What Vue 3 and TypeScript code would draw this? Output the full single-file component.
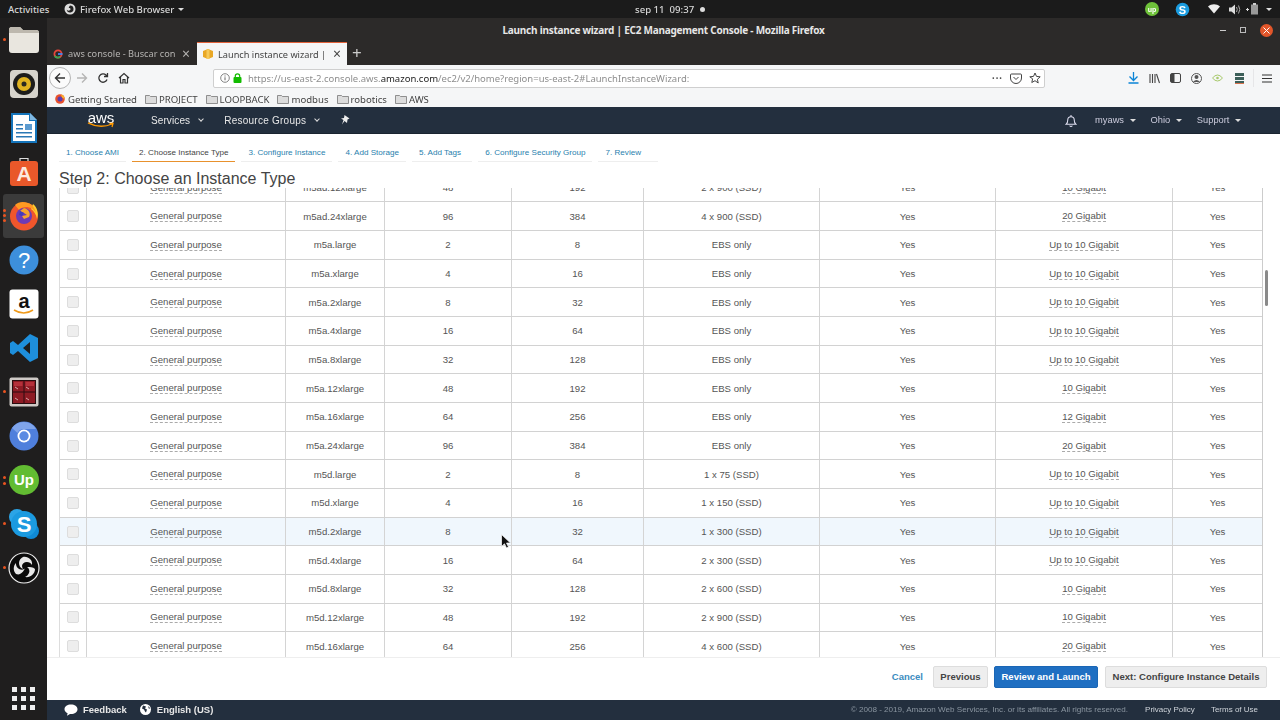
<script setup lang="ts">
type Row = {
  type: string;
  cpu: number;
  mem: number;
  storage: string;
  net: string;
  hover?: boolean;
};

const rows: Row[] = [
  { type: "m5ad.12xlarge", cpu: 48, mem: 192, storage: "2 x 900 (SSD)", net: "10 Gigabit" },
  { type: "m5ad.24xlarge", cpu: 96, mem: 384, storage: "4 x 900 (SSD)", net: "20 Gigabit" },
  { type: "m5a.large", cpu: 2, mem: 8, storage: "EBS only", net: "Up to 10 Gigabit" },
  { type: "m5a.xlarge", cpu: 4, mem: 16, storage: "EBS only", net: "Up to 10 Gigabit" },
  { type: "m5a.2xlarge", cpu: 8, mem: 32, storage: "EBS only", net: "Up to 10 Gigabit" },
  { type: "m5a.4xlarge", cpu: 16, mem: 64, storage: "EBS only", net: "Up to 10 Gigabit" },
  { type: "m5a.8xlarge", cpu: 32, mem: 128, storage: "EBS only", net: "Up to 10 Gigabit" },
  { type: "m5a.12xlarge", cpu: 48, mem: 192, storage: "EBS only", net: "10 Gigabit" },
  { type: "m5a.16xlarge", cpu: 64, mem: 256, storage: "EBS only", net: "12 Gigabit" },
  { type: "m5a.24xlarge", cpu: 96, mem: 384, storage: "EBS only", net: "20 Gigabit" },
  { type: "m5d.large", cpu: 2, mem: 8, storage: "1 x 75 (SSD)", net: "Up to 10 Gigabit" },
  { type: "m5d.xlarge", cpu: 4, mem: 16, storage: "1 x 150 (SSD)", net: "Up to 10 Gigabit" },
  { type: "m5d.2xlarge", cpu: 8, mem: 32, storage: "1 x 300 (SSD)", net: "Up to 10 Gigabit", hover: true },
  { type: "m5d.4xlarge", cpu: 16, mem: 64, storage: "2 x 300 (SSD)", net: "Up to 10 Gigabit" },
  { type: "m5d.8xlarge", cpu: 32, mem: 128, storage: "2 x 600 (SSD)", net: "10 Gigabit" },
  { type: "m5d.12xlarge", cpu: 48, mem: 192, storage: "2 x 900 (SSD)", net: "10 Gigabit" },
  { type: "m5d.16xlarge", cpu: 64, mem: 256, storage: "4 x 600 (SSD)", net: "20 Gigabit" },
];

const steps = [
  "1. Choose AMI",
  "2. Choose Instance Type",
  "3. Configure Instance",
  "4. Add Storage",
  "5. Add Tags",
  "6. Configure Security Group",
  "7. Review",
];

const folders = ["PROJECT", "LOOPBACK", "modbus", "robotics", "AWS"];
</script>

<template>
  <div class="screen">
    <header class="topbar">
      <span class="activities">Activities</span>
      <span class="appmenu">
        <svg width="12" height="12" viewBox="0 0 12 12">
          <circle cx="6" cy="6" r="5.5" fill="#ddd" />
          <path d="M6 2.5a3.5 3.5 0 1 1-3.4 4.3c1 1.2 3.6 1.2 3.9-.6.2-1-1-1.4-1.8-1.2.2-1 .6-1.8 1.3-2.5z" fill="#222" />
        </svg>
        Firefox Web Browser
        <i class="caret light"></i>
      </span>
      <span class="clock">sep 11&nbsp; 09:37 <b class="clockdot"></b></span>
      <div class="tray">
        <svg class="tray-up" width="14" height="14" viewBox="0 0 14 14">
          <circle cx="7" cy="7" r="7" fill="#6fc23a" />
          <text x="7" y="9.5" text-anchor="middle" font-size="7" font-weight="700" fill="#fff" font-family="Liberation Sans, sans-serif">up</text>
        </svg>
        <svg class="tray-s" width="15" height="15" viewBox="0 0 15 15">
          <circle cx="7.5" cy="7.5" r="6.8" fill="#1a9ce0" />
          <text x="7.5" y="11.5" text-anchor="middle" font-size="11" font-weight="700" fill="#fff" font-family="Liberation Sans, sans-serif">S</text>
        </svg>
        <svg class="tray-wifi" width="12" height="10" viewBox="0 0 12 10"><path d="M0 2.5C3.5-.6 8.500-.6 12 2.500L6 9.500z" fill="#eee" /></svg>
        <svg class="tray-vol" width="12" height="11" viewBox="0 0 12 11">
          <path d="M0 3.500h2.500L6 .5v10L2.500 7.500H0z" fill="#ddd" />
          <path d="M7.500 3q1.500 2.500 0 5M9.500 1.500q2.500 4 0 8" stroke="#aaa" fill="none" />
        </svg>
        <svg class="tray-bat" width="14" height="12" viewBox="0 0 14 12">
          <path d="M0 6.500h3M1.500 5v3" stroke="#ddd" />
          <rect x="5" y="1.500" width="7" height="10" fill="#999" />
          <rect x="7" y="0" width="3" height="2" fill="#ccc" />
        </svg>
        <i class="caret light tray-caret"></i>
      </div>
    </header>

    <div class="desk">
      <aside class="dock">
        <div class="dockicons">
          <div class="dockitem">
            <b class="rundot"></b>
            <svg width="30" height="26" viewBox="0 0 30 26">
              <path d="M0 3q0-3 3-3h8l3 3h13q3 0 3 3v17q0 3-3 3H3q-3 0-3-3z" fill="#e9e6df" />
              <path d="M0 3q0-3 3-3h8l3 3h13q3 0 3 3H0z" fill="#bdb8ae" />
            </svg>
          </div>
          <div class="dockitem">
            <svg width="30" height="30" viewBox="0 0 30 30">
              <rect x="1" y="1" width="28" height="28" rx="4" fill="#d7d4cc" />
              <circle cx="15" cy="15" r="11" fill="#1d1d1b" />
              <circle cx="15" cy="15" r="7" fill="#e0b320" />
              <circle cx="15" cy="15" r="2.500" fill="#2a2a22" />
            </svg>
          </div>
          <div class="dockitem">
            <svg width="28" height="32" viewBox="0 0 28 32">
              <path d="M1 1h19l7 7v23H1z" fill="#1474ba" />
              <path d="M3 3h16v6h6v20H3z" fill="#fff" />
              <path d="M20 1l7 7h-7z" fill="#7fb7e0" />
              <path d="M6 12h7v1.500H6zM6 16h7v1.500H6zM6 20h16v1.500H6zM6 24h16v1.500H6z" fill="#2a78b5" />
              <path d="M15 18v-6h7v6z" fill="#5b9bd0" />
            </svg>
          </div>
          <div class="dockitem">
            <svg width="30" height="30" viewBox="0 0 30 30">
              <path d="M11 4V1.500h8V4" stroke="#ddd" fill="none" stroke-width="1.200" />
              <rect x="1" y="4" width="28" height="25" rx="3" fill="#e9582a" />
              <text x="15" y="24" text-anchor="middle" font-size="21" font-weight="700" fill="#fbe9df" font-family="Liberation Sans, sans-serif">A</text>
            </svg>
          </div>
          <div class="dockitem active">
            <b class="rundot triple"></b>
            <svg width="30" height="30" viewBox="0 0 30 30">
              <circle cx="15" cy="15.500" r="14" fill="#f0562c" />
              <path d="M24 3c4 3 6 9 4 15-1-5-3-8-6-10z" fill="#ffcb2e" />
              <path d="M6 4c3-3 8-4 13-2 4 1 7 5 8 10-2-4-6-6-10-6-3 0-5 1-7 3z" fill="#ff9a22" />
              <circle cx="15" cy="15" r="8" fill="#6d3bb5" />
              <path d="M15 7l-4 3 4 2 3 2-5 1 2 3 5-2c2-3 0-8-5-9z" fill="#f6a42e" />
              <path d="M11 10l4 2-2 3-3-1z" fill="#3d3dbe" />
            </svg>
          </div>
          <div class="dockitem">
            <svg width="30" height="30" viewBox="0 0 30 30">
              <circle cx="15" cy="15" r="14.500" fill="#3d8fdb" />
              <text x="15" y="23" text-anchor="middle" font-size="22" fill="#fff" font-family="Liberation Sans, sans-serif">?</text>
            </svg>
          </div>
          <div class="dockitem">
            <svg width="30" height="30" viewBox="0 0 30 30">
              <rect x="0.500" y="0.500" width="29" height="29" rx="3" fill="#fff" />
              <text x="15" y="19" text-anchor="middle" font-size="20" font-weight="700" fill="#111" font-family="Liberation Sans, sans-serif">a</text>
              <path d="M5 21q10 6 19 0" stroke="#f09a1a" stroke-width="1.600" fill="none" />
            </svg>
          </div>
          <div class="dockitem">
            <svg width="30" height="30" viewBox="0 0 30 30">
              <path d="M21 1l8 4v20l-8 4-12-11-5 4-3-2v-10l3-2 5 4zM21 9l-7 6 7 6z" fill="#1e8fdc" />
            </svg>
          </div>
          <div class="dockitem">
            <b class="rundot"></b>
            <svg width="30" height="30" viewBox="0 0 30 30">
              <rect x="0.500" y="0.500" width="29" height="29" rx="2" fill="#cfcac6" />
              <rect x="3" y="3" width="24" height="24" fill="#2a0d10" />
              <path d="M4 4h10.500v10.500H4zM15.500 4H26v10.500H15.500zM4 15.500h10.500V26H4zM15.500 15.500H26V26H15.500z" fill="#8e1b24" />
              <path d="M5 5h8.500v4H5zM16.500 5H25v4h-8.500z" fill="#b5303a" />
              <path d="M6 21l3 2M17 21l3 2M6 10l3 2M17 10l3 2" stroke="#e8c9c9" stroke-width=".8" />
            </svg>
          </div>
          <div class="dockitem">
            <svg width="30" height="30" viewBox="0 0 30 30">
              <circle cx="15" cy="15" r="14.500" fill="#4f7fdc" />
              <path d="M15 1a14 14 0 0 1 12 7H15a7 7 0 0 0-6.500 4L3 7A14 14 0 0 1 15 1z" fill="#7fa4ea" />
              <circle cx="15" cy="15" r="6.500" fill="#fff" />
              <circle cx="15" cy="15" r="4.700" fill="#5a8ae3" />
            </svg>
          </div>
          <div class="dockitem">
            <b class="rundot double"></b>
            <svg width="30" height="30" viewBox="0 0 30 30">
              <circle cx="15" cy="15" r="15" fill="#62bc32" />
              <text x="15" y="20" text-anchor="middle" font-size="15" font-weight="700" fill="#fff" font-family="Liberation Sans, sans-serif">Up</text>
            </svg>
          </div>
          <div class="dockitem">
            <b class="rundot"></b>
            <svg width="32" height="32" viewBox="0 0 32 32">
              <circle cx="9" cy="9" r="8" fill="#2ba4e6" />
              <circle cx="23" cy="23" r="8" fill="#0f8ad6" />
              <circle cx="16" cy="16" r="13" fill="#1b9ae0" />
              <text x="16" y="24" text-anchor="middle" font-size="22" font-weight="700" fill="#fff" font-family="Liberation Sans, sans-serif">S</text>
            </svg>
          </div>
          <div class="dockitem">
            <b class="rundot"></b>
            <svg width="32" height="32" viewBox="0 0 32 32">
              <circle cx="16" cy="16" r="15" fill="#0b0b0b" stroke="#eee" stroke-width="1.200" />
              <path d="M15 5c5-1 10 3 9 8-1-2-3-3-5-3-3 0-5 2-5 4 0 1 .5 2 1 3-3-1-4-4-4-6 0-3 2-5 4-6zM8 22c-3-3-3-8 0-11 0 2 0 4 3 6 2 1 4 1 5 0 1 0 0 0 1-1-1 3-3 5-5 6-2 1-3 0-4 0zM27 17c0 5-5 9-10 8 2-1 3-2 4-4 1-2 0-5-2-6 3 0 6 0 8 2z" fill="#e8e8e8" />
            </svg>
          </div>
        </div>
        <div class="grid-btn">
          <i v-for="n in 9" :key="n"></i>
        </div>
      </aside>

      <main class="window">
        <div class="titlebar">
          <span>Launch instance wizard | EC2 Management Console - Mozilla Firefox</span>
          <div class="wincontrols">
            <i class="win-min"></i>
            <i class="win-max"></i>
            <b class="win-close">
              <svg width="7" height="7" viewBox="0 0 7 7"><path d="M.5.500l6 6M6.500.500l-6 6" stroke="#fff" stroke-width="1" /></svg>
            </b>
          </div>
        </div>

        <div class="tabstrip">
          <div class="tab">
            <svg width="10" height="10" viewBox="0 0 10 10">
              <circle cx="5" cy="5" r="3.600" fill="none" stroke="#e8453c" stroke-width="1.800" />
              <path d="M5 5h4.500" stroke="#4285f4" stroke-width="1.800" />
              <path d="M1.800 7a3.600 3.600 0 0 0 5.500.7" fill="none" stroke="#34a853" stroke-width="1.800" />
            </svg>
            <span class="tab-title">aws console - Buscar con</span>
            <span class="tab-x">×</span>
          </div>
          <div class="tab current">
            <svg width="10" height="10" viewBox="0 0 10 10">
              <path d="M5 0l5 2v6l-5 2-5-2V2z" fill="#e9a826" />
              <path d="M3.500.500h3V10h-3z" fill="#f7ca5a" />
            </svg>
            <span class="tab-title">Launch instance wizard |</span>
            <span class="tab-x">×</span>
          </div>
          <span class="newtab">+</span>
        </div>

        <div class="toolbar">
          <div class="navbtns">
            <span class="backbtn">
              <svg width="12" height="12" viewBox="0 0 12 12"><path d="M11 6H1.500M6 1.500L1.500 6 6 10.500" fill="none" stroke="#333" stroke-width="1.400" /></svg>
            </span>
            <svg width="12" height="12" viewBox="0 0 12 12"><path d="M1 6h9.500M6 1.500L10.500 6 6 10.500" fill="none" stroke="#b5b5b5" stroke-width="1.400" /></svg>
            <svg class="reload" width="12" height="12" viewBox="0 0 12 12"><path d="M10 7.500A4.200 4.200 0 1 1 9 3L10.500 4.500M10.500 1v3.500H7" fill="none" stroke="#333" stroke-width="1.300" /></svg>
            <svg class="home" width="12" height="12" viewBox="0 0 12 12"><path d="M1 6l5-4.500L11 6M2.500 5v6h2.500V7.500h2V11h2.500V5" fill="none" stroke="#333" stroke-width="1.200" /></svg>
          </div>
          <div class="urlbar">
            <svg width="10" height="10" viewBox="0 0 10 10"><circle cx="5" cy="5" r="4.300" fill="none" stroke="#666" stroke-width=".8" /><path d="M5 4.300v3M5 2.500v1" stroke="#666" /></svg>
            <svg class="lock" width="9" height="10" viewBox="0 0 9 10"><rect x="0.500" y="4" width="8" height="6" rx="1" fill="#12bc00" /><path d="M2.300 4.500V3a2.200 2.200 0 0 1 4.400 0v1.500" fill="none" stroke="#12bc00" stroke-width="1.200" /></svg>
            <span class="url">https://us-east-2.console.aws.<b>amazon.com</b>/ec2/v2/home?region=us-east-2#LaunchInstanceWizard:</span>
            <span class="urlactions">
              <span class="dots">•••</span>
              <svg width="12" height="11" viewBox="0 0 12 11"><path d="M1.500 1h9a1 1 0 0 1 1 1v3a5.500 5.500 0 0 1-11 0V2a1 1 0 0 1 1-1z" fill="none" stroke="#444" /><path d="M3.500 4L6 6.500 8.500 4" fill="none" stroke="#444" /></svg>
              <svg width="12" height="12" viewBox="0 0 12 12"><path d="M6 1l1.500 3.400 3.700.4-2.800 2.500.8 3.700L6 8.700l-3.200 1.800.8-3.700L.8 4.800l3.700-.4z" fill="none" stroke="#444" /></svg>
            </span>
          </div>
          <div class="tools">
            <svg class="t-down" width="11" height="12" viewBox="0 0 11 12"><path d="M5.500 0v8M1.500 4.500l4 4 4-4M.5 11h10" fill="none" stroke="#0a84d6" stroke-width="1.300" /></svg>
            <svg class="t-lib" width="11" height="11" viewBox="0 0 11 11"><path d="M1 1v9M3.500 1v9M6 1v9M7.500 1l3 9" fill="none" stroke="#444" stroke-width="1.100" /></svg>
            <svg class="t-side" width="11" height="10" viewBox="0 0 11 10"><rect x=".5" y=".5" width="10" height="9" rx="1.500" fill="none" stroke="#444" /><rect x="1" y="1" width="3.500" height="8" fill="#444" /></svg>
            <svg class="t-acc" width="11" height="11" viewBox="0 0 11 11"><circle cx="5.500" cy="5.500" r="5" fill="none" stroke="#555" /><circle cx="5.500" cy="4" r="2" fill="#555" /><path d="M2 9q3.500-4 7 0z" fill="#555" /></svg>
            <svg class="t-green" width="11" height="8" viewBox="0 0 11 8"><path d="M.5 4q5-6 10 0-5 6-10 0z" fill="none" stroke="#a7c96b" /><circle cx="5.500" cy="4" r="1.300" fill="#a7c96b" /></svg>
            <svg class="t-stack" width="9" height="11" viewBox="0 0 9 11"><path d="M0 0h9v3H0zM0 4h9v3H0zM0 8h9v2H0z" fill="#3c5f59" /><path d="M0 10.500h9" stroke="#d9734e" /></svg>
            <i class="t-sep"></i>
            <svg class="t-menu" width="10" height="9" viewBox="0 0 10 9"><path d="M0 1h10M0 4.500h10M0 8h10" stroke="#333" stroke-width="1.200" /></svg>
          </div>
        </div>

        <div class="bookmarks">
          <span class="bm first">
            <svg width="10" height="10" viewBox="0 0 10 10">
              <circle cx="5" cy="5" r="4.800" fill="#e8512c" />
              <circle cx="5" cy="5" r="2.500" fill="#5a3cb0" />
              <path d="M6 .5a4.500 4.500 0 0 1 3.500 4.500L7 3.500z" fill="#f9b32b" />
            </svg>
            Getting Started
          </span>
          <span v-for="name in folders" :key="name" class="bm">
            <svg width="12" height="10" viewBox="0 0 12 10">
              <path d="M.5 1.500h4l1 1h6v7H.5z" fill="#dcdcdc" stroke="#777" stroke-width=".8" />
            </svg>
            {{ name }}
          </span>
        </div>

        <nav class="awsnav">
          <div class="awslogo">
            <span>aws</span>
            <svg width="28" height="6" viewBox="0 0 28 6"><path d="M1 .8Q13 7 25 2M22.500 1.500L26 1.500 25 5" fill="none" stroke="#f90" stroke-width="1.300" /></svg>
          </div>
          <span class="navlink services">Services <i class="chev"></i></span>
          <span class="navlink groups">Resource Groups <i class="chev"></i></span>
          <svg class="pin" width="9" height="10" viewBox="0 0 9 10"><path d="M3.500 0l5 3.500-2 1L6 8 3.500 6 1 9.500 2.500 5 0 3.500l3-.5z" fill="#eee" /></svg>
          <div class="navright">
            <svg class="bell" width="12" height="13" viewBox="0 0 11 12"><path d="M1 9.500q1.500-1 1.500-4a3 3 0 0 1 6 0q0 3 1.500 4zM4.500 10.500a1 1 0 0 0 2 0M5.500 1V2" fill="none" stroke="#dde" stroke-width="1" /></svg>
            <span class="navitem">myaws <i class="caret light"></i></span>
            <span class="navitem">Ohio <i class="caret light"></i></span>
            <span class="navitem">Support <i class="caret light"></i></span>
          </div>
        </nav>

        <section class="content">
          <ul class="steps">
            <li v-for="(s, i) in steps" :key="s" :class="{ on: i === 1 }">{{ s }}</li>
          </ul>
          <h1 class="heading">Step 2: Choose an Instance Type</h1>

          <div class="tablewrap">
            <div class="table">
              <div v-for="r in rows" :key="r.type" class="row" :class="{ hover: r.hover }">
                <div class="cell"><i class="check"></i></div>
                <div class="cell"><span class="tip">General purpose</span></div>
                <div class="cell">{{ r.type }}</div>
                <div class="cell">{{ r.cpu }}</div>
                <div class="cell">{{ r.mem }}</div>
                <div class="cell">{{ r.storage }}</div>
                <div class="cell">Yes</div>
                <div class="cell"><span class="tip">{{ r.net }}</span></div>
                <div class="cell">Yes</div>
              </div>
            </div>
          </div>

          <div class="actions">
            <a class="cancel">Cancel</a>
            <button class="btn prev">Previous</button>
            <button class="btn primary">Review and Launch</button>
            <button class="btn next">Next: Configure Instance Details</button>
          </div>

          <i class="scrollthumb"></i>
          <svg class="cursor" width="10" height="15" viewBox="0 0 10 15">
            <path d="M.5.500v12l3-2.700 2 4.200 2-1-2-4h4z" fill="#111" stroke="#fff" stroke-width=".7" />
          </svg>
        </section>

        <footer class="bottombar">
          <span class="fb">
            <svg width="14" height="12" viewBox="0 0 14 12"><path d="M7 .5c3.600 0 6.500 2 6.500 4.700S10.600 10 7 10l-1 0-3 1.800.6-2.600C1.700 8.300.5 6.900.5 5.200.5 2.500 3.400.5 7 .5z" fill="#fff" /></svg>
            Feedback
          </span>
          <span class="fb lang">
            <svg width="11" height="11" viewBox="0 0 11 11"><circle cx="5.500" cy="5.500" r="5.500" fill="#fff" /><path d="M3 1.500l3 1-1 2 2 1-1 3-1-1-1-2-2-1zM8 2l2 2-1 1z" fill="#232f3e" /></svg>
            English (US)
          </span>
          <span class="copy">© 2008 - 2019, Amazon Web Services, Inc. or its affiliates. All rights reserved.</span>
          <span class="legal privacy">Privacy Policy</span>
          <span class="legal terms">Terms of Use</span>
        </footer>
      </main>
    </div>
  </div>
</template>

<style scoped>
.screen {
  display: flex;
  flex-direction: column;
  width: 1280px;
  height: 720px;
  overflow: hidden;
  font-family: "Liberation Sans", Arial, sans-serif;
  color: #444;
  filter: blur(0.3px);
}

.screen * {
  box-sizing: border-box;
}

.topbar {
  position: relative;
  display: flex;
  align-items: center;
  flex: none;
  height: 18px;
  padding-left: 8px;
  font-family: "Noto Sans", sans-serif;
  font-size: 9.6px;
  font-weight: 500;
  color: #d8d8d8;
  background: #1b1b1b;
}

.activities {
  width: 54px;
}

.appmenu {
  display: flex;
  align-items: center;
  column-gap: 4px;
  margin-left: 2px;
}

.clock {
  position: absolute;
  left: 635px;
  display: flex;
  align-items: center;
  white-space: pre;
}

.clockdot {
  display: block;
  width: 5px;
  height: 5px;
  margin-left: 3px;
  background: #ddd;
  border-radius: 50%;
}

.tray {
  display: flex;
  align-items: center;
  margin-left: auto;
  padding-right: 8px;
}

.tray-s {
  margin-left: 16px;
}

.tray-wifi {
  margin-left: 18px;
}

.tray-vol {
  margin-left: 9px;
}

.tray-bat {
  margin-left: 5px;
}

.tray-caret {
  margin-left: 6px;
}

.caret {
  display: inline-block;
  width: 0;
  height: 0;
  border-top: 3px solid #333;
  border-right: 3px solid transparent;
  border-left: 3px solid transparent;
  vertical-align: middle;
}

.caret.light {
  border-top-color: #ddd;
}

.desk {
  display: flex;
  flex: 1;
  min-height: 0;
}

.dock {
  display: flex;
  flex: none;
  flex-direction: column;
  align-items: center;
  justify-content: space-between;
  width: 47px;
  padding: 0 0 10px;
  background: #1f1e1e;
}

.dockicons {
  display: flex;
  flex-direction: column;
  width: 100%;
}

.dockitem {
  position: relative;
  display: flex;
  align-items: center;
  justify-content: center;
  height: 44px;
}

.dockitem.active {
  margin: 0 3px;
  background: #3b3b3b;
  border-radius: 3px;
}

.rundot {
  position: absolute;
  top: 20px;
  left: 3px;
  width: 3px;
  height: 3px;
  background: #e95420;
  border-radius: 50%;
}

.rundot.double {
  top: 18px;
  box-shadow: 0 6px 0 #e95420;
}

.rundot.triple {
  top: 15px;
  left: 0;
  box-shadow: 0 5px 0 #e95420, 0 10px 0 #e95420;
}

.grid-btn {
  display: grid;
  grid-template-columns: repeat(3, 5px);
  gap: 4px;
  justify-content: center;
}

.grid-btn i {
  width: 5px;
  height: 5px;
  background: #eee;
}

.window {
  position: relative;
  display: flex;
  flex: 1;
  flex-direction: column;
  min-width: 0;
}

.titlebar {
  position: relative;
  display: flex;
  align-items: center;
  justify-content: center;
  flex: none;
  height: 24px;
  font-family: "Noto Sans", sans-serif;
  font-size: 10px;
  font-weight: 700;
  letter-spacing: -0.24px;
  color: #e6e6e6;
  background: #2c2a29;
}

.wincontrols {
  position: absolute;
  top: 0;
  right: 7px;
  display: flex;
  align-items: center;
  column-gap: 14px;
  height: 100%;
}

.win-min {
  width: 6px;
  height: 1px;
  background: #ccc;
}

.win-max {
  width: 6px;
  height: 6px;
  border: 1px solid #bbb;
}

.win-close {
  display: flex;
  align-items: center;
  justify-content: center;
  width: 13px;
  height: 13px;
  background: #e2562a;
  border-radius: 50%;
}

.tabstrip {
  display: flex;
  align-items: stretch;
  flex: none;
  height: 23px;
  column-gap: 1px;
  background: #2c2a29;
}

.tab {
  display: flex;
  align-items: center;
  width: 149px;
  padding: 0 6px;
  column-gap: 5px;
  font-family: "Noto Sans", sans-serif;
  font-size: 9.2px;
  color: #b5b3b1;
}

.tab-title {
  flex: 1;
  overflow: hidden;
  white-space: nowrap;
}

.tab-x {
  font-size: 14px;
  line-height: 1;
}

.tab.current {
  width: 150px;
  color: #444;
  background: #f5f6f7;
  border-top: 1px solid #e2623a;
}

.newtab {
  margin-left: 4px;
  font-family: "Noto Sans", sans-serif;
  font-size: 17px;
  line-height: 22px;
  color: #ccc;
}

.toolbar {
  position: relative;
  display: flex;
  align-items: center;
  flex: none;
  height: 26px;
  background: #f5f6f7;
}

.navbtns {
  display: flex;
  align-items: center;
  width: 166px;
  padding-left: 2px;
}

.backbtn {
  display: flex;
  align-items: center;
  justify-content: center;
  width: 22px;
  height: 22px;
  margin-right: 5px;
  background: #fbfbfb;
  border: 1px solid #b5b5b5;
  border-radius: 50%;
}

.reload {
  margin-left: 9px;
}

.home {
  margin-left: 9px;
}

.urlbar {
  display: flex;
  align-items: center;
  width: 832px;
  height: 19px;
  padding: 0 3px 0 6px;
  font-family: "Noto Sans", sans-serif;
  font-size: 9.5px;
  color: #8e8e8e;
  background: #fff;
  border: 1px solid #cfcfcf;
  border-radius: 2px;
}

.lock {
  margin-left: 3px;
}

.url {
  margin-left: 6px;
  white-space: nowrap;
}

.url b {
  font-weight: 400;
  color: #222;
}

.urlactions {
  display: flex;
  align-items: center;
  column-gap: 7px;
  margin-left: auto;
}

.dots {
  font-size: 7px;
  letter-spacing: 1px;
  color: #555;
}

.tools {
  display: flex;
  align-items: center;
  padding-left: 83px;
}

.t-lib,
.t-side,
.t-acc,
.t-green {
  margin-left: 10px;
}

.t-stack {
  margin-left: 12px;
}

.t-sep {
  width: 1px;
  height: 18px;
  margin-left: 9px;
  background: #e6e6e8;
}

.t-menu {
  margin-left: 8px;
}

.bookmarks {
  display: flex;
  align-items: center;
  flex: none;
  height: 16px;
  padding-left: 8px;
  font-family: "Noto Sans", sans-serif;
  font-size: 9.6px;
  color: #444;
  background: #f5f6f7;
}

.bm {
  display: flex;
  align-items: center;
  margin-right: 8px;
  column-gap: 2px;
  white-space: nowrap;
}

.bm.first {
  column-gap: 3px;
}

.awsnav {
  display: flex;
  align-items: center;
  flex: none;
  height: 27px;
  padding-left: 40px;
  font-size: 10px;
  color: #e8e8e8;
  background: #232f3e;
  border-bottom: 1px solid #1a2430;
}

.awslogo {
  display: flex;
  flex-direction: column;
  align-items: center;
  width: 28px;
  margin-bottom: 3px;
}

.awslogo span {
  margin-bottom: -3px;
  font-size: 15px;
  line-height: 15px;
  color: #fff;
}

.navlink {
  display: flex;
  align-items: center;
  white-space: nowrap;
  letter-spacing: 0.1px;
}

.services {
  margin-left: 36px;
}

.groups {
  margin-left: 21px;
  letter-spacing: 0.25px;
}

.chev {
  width: 4px;
  height: 4px;
  margin: -2px 0 0 9px;
  border-right: 1px solid #ddd;
  border-bottom: 1px solid #ddd;
  transform: rotate(45deg);
}

.pin {
  margin-left: 22px;
}

.navright {
  display: flex;
  align-items: center;
  margin-left: auto;
  padding-right: 39px;
  column-gap: 15px;
  font-size: 9.3px;
  color: #ccd;
}

.navitem {
  white-space: nowrap;
}

.navitem .caret {
  margin-left: 3px;
}

.bell {
  margin-right: 3px;
}

.content {
  position: relative;
  display: flex;
  flex: 1;
  flex-direction: column;
  min-height: 0;
  padding-left: 12px;
  background: #fff;
}

.steps {
  display: flex;
  flex: none;
  height: 28px;
  margin: 0;
  padding: 0;
  column-gap: 6px;
  list-style: none;
}

.steps li {
  display: flex;
  align-items: center;
  height: 28px;
  padding: 9px 7px 0;
  font-size: 8.1px;
  color: #2a7fae;
  white-space: nowrap;
  border-bottom: 1px solid #eee;
}

.steps li:nth-child(5) {
  padding-right: 11px;
}

.steps li:last-child {
  padding-right: 17px;
}

.steps li.on {
  color: #444;
  border-bottom: 1px solid #e8912d;
}

.heading {
  flex: none;
  height: 26px;
  margin: 0;
  font-size: 16px;
  font-weight: 400;
  line-height: 34px;
  color: #444;
  white-space: nowrap;
}

.tablewrap {
  flex: none;
  width: 1204px;
  height: 469px;
  overflow: hidden;
  border-right: 1px solid #ccc;
  border-left: 1px solid #ddd;
}

.table {
  margin-top: -14.2px;
}

.row {
  display: grid;
  grid-template-columns: 27px 199px 99px 127px 132px 176px 176px 177px 1fr;
  height: 28.67px;
  border-bottom: 1px solid #d2d2d2;
}

.row.hover {
  background: #f0f7fd;
}

.cell {
  display: flex;
  align-items: center;
  justify-content: center;
  font-size: 9.6px;
  color: #555;
  white-space: nowrap;
  border-right: 1px solid #d4d4d4;
}

.cell:last-child {
  border-right: 0;
}

.tip {
  line-height: 11px;
  border-bottom: 1px dashed #aaa;
}

.check {
  display: block;
  width: 12px;
  height: 12px;
  background: #eee;
  border: 1px solid #ddd;
  border-radius: 2px;
}

.actions {
  display: flex;
  align-items: center;
  justify-content: flex-end;
  flex: 1;
  margin-left: -12px;
  padding-right: 13px;
  padding-bottom: 5px;
  column-gap: 6px;
  border-top: 1px solid #eee;
}

.cancel {
  margin-right: 4px;
  font-size: 9.5px;
  font-weight: 700;
  color: #3b8cc0;
}

.btn {
  height: 22px;
  padding: 0;
  font-family: "Liberation Sans", Arial, sans-serif;
  font-size: 9.55px;
  font-weight: 700;
  color: #444;
  white-space: nowrap;
  background: #eee;
  border: 1px solid #ddd;
  border-radius: 2px;
}

.btn.prev {
  width: 55px;
}

.btn.primary {
  width: 104px;
  color: #fff;
  background: #1f6fc2;
  border-color: #1a66b5;
}

.btn.next {
  width: 162px;
  margin-left: 1px;
}

.scrollthumb {
  position: absolute;
  top: 136px;
  right: 12px;
  width: 3px;
  height: 36px;
  background: #8a8a8a;
  border-radius: 2px;
}

.cursor {
  position: absolute;
  top: 400px;
  left: 454px;
}

.bottombar {
  display: flex;
  align-items: center;
  flex: none;
  height: 20px;
  padding-left: 17px;
  padding-bottom: 1px;
  font-size: 9.5px;
  color: #e8e8e8;
  background: #232f3e;
}

.fb {
  display: flex;
  align-items: center;
  column-gap: 5px;
  font-weight: 700;
}

.lang {
  margin-left: 13px;
  column-gap: 6px;
}

.copy {
  margin-left: auto;
  font-size: 8.1px;
  color: #8a95a0;
}

.legal {
  font-size: 8px;
  color: #cfd4da;
}

.privacy {
  margin-left: 17px;
}

.terms {
  margin-left: 16px;
  margin-right: 22px;
}
</style>

<style>
html,
body {
  margin: 0;
  background: #1b1b1b;
}
</style>
